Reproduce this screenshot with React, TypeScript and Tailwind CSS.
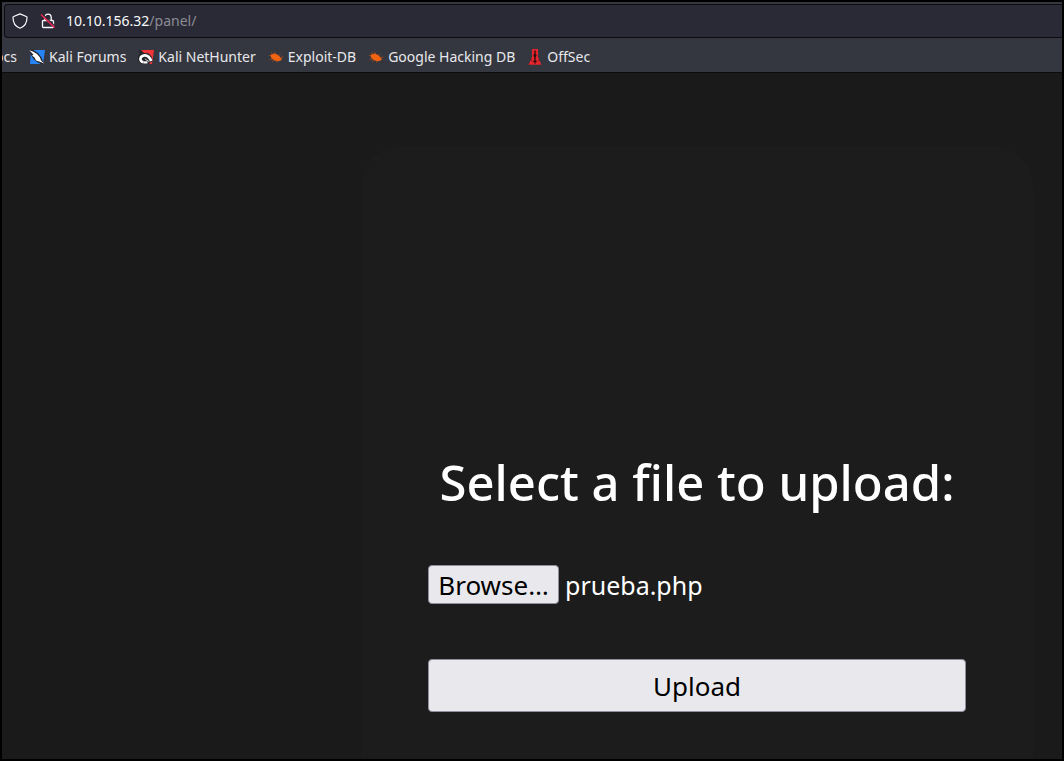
import { useRef, useState } from "react";
import type { ReactNode } from "react";

function ShieldIcon() {
  return (
    <svg viewBox="0 0 16 16" className="size-4 shrink-0" fill="none" stroke="#fbfbfe" strokeWidth="1.2" strokeLinejoin="round" aria-hidden="true">
      <path d="M8 .9 14.3 3.5c.5.2.7.6.7 1C15 9.800 12.200 13.700 8 15.200 3.800 13.700 1 9.800 1 4.500c0-.4.2-.8.7-1Z" />
    </svg>
  );
}

function InsecureIcon() {
  return (
    <svg viewBox="0 0 16 16" className="size-4 shrink-0" fill="none" aria-hidden="true">
      <path d="M4.800 7.500V4.300a3.200 3.200 0 0 1 6.400 0v3.200M3.500 7.500h9c.6 0 1 .4 1 1v5c0 .6-.4 1-1 1h-9c-.6 0-1-.4-1-1v-5c0-.6.4-1 1-1Z" stroke="#fbfbfe" strokeWidth="1.3" />
      <path d="M2.200 .8 15.500 13.700" stroke="#292a36" strokeWidth="1.200" />
      <path d="M1 1.500 14.600 14.700" stroke="#e22850" strokeWidth="1.700" />
    </svg>
  );
}

function ForumsIcon() {
  return (
    <svg viewBox="0 0 16 16" className="size-4 shrink-0" aria-hidden="true">
      <path d="M2 1h14l-2 14H1Z" fill="#2684f5" />
      <path d="M0 .5 4 .8 9 4l3.500 4.500 1 3L16 15l-3.500.3L8 13 4.500 10 2 6Z" fill="#23252b" />
      <path d="M.3 1.200 4 2.500 8 5l3 3.500 1 3 3.500 3.300-4.500-2L7 11.500 5.500 8.500 3 6.500l1.500-.8Z" fill="#fff" />
    </svg>
  );
}

function NetHunterIcon() {
  return (
    <svg viewBox="0 0 16 16" className="size-4 shrink-0" aria-hidden="true">
      <path d="M3 1h13l-2 14H3Z" fill="#f0343a" />
      <path d="M.5 1.500 3 1l3 3 4.500.3L13.500 7.500l1.200 5-2 .5-1.700 2H3L0 12V7l2-2Z" fill="#22242a" />
      <path d="M5.500 13.300C1.500 12.500 1.500 8 5 6.700c4-1.300 6.500 1.300 8.300 5.300" fill="none" stroke="#fff" strokeWidth="2.600" />
      <path d="M5.500 13.400h4" stroke="#fff" strokeWidth="2.200" />
      <path d="m6.800 9.800 4.700 3" stroke="#d5d5d8" strokeWidth="1" />
    </svg>
  );
}

function BugIcon() {
  return (
    <svg viewBox="0 0 16 16" className="size-4 shrink-0" aria-hidden="true">
      <path d="M2.500 6.500C3.500 4.800 6 4.500 8.500 5.200c2.400.8 3.800 2.300 4 3.800l1.700 1-1.700 1.500c-2.300 1.200-5 .8-7-.7C3.700 9.800 2.700 8.500 2.500 6.500Z" fill="#f36412" />
      <path d="M4.500 6 3.500 3.300M8 5.200 6.200 2.800M11 6.500l1.500-1.500M12.500 8.500l2.800-.5M4.500 10l-3 .3M6 11l-1.800 1.800M9 11.500l-.5 2M1 6.500h2" stroke="#b54b17" strokeWidth=".8" fill="none" />
    </svg>
  );
}

function OffSecIcon() {
  return (
    <svg viewBox="0 0 16 16" className="size-4 shrink-0" aria-hidden="true">
      <path d="M5 0h6v8l3.500 7.700h-13L5 8Z" fill="#e5252b" />
      <path d="M7.300 1.500h1.400V5l1 1-1 2.500v3l2 1-2 .5v1.500H7.300V13l-2-.5 2-1v-3L6.300 6l1-1Z" fill="#2b0d10" />
      <path d="M4.500 9.500 3 12.500l2-.7ZM11.500 9.500l1.500 3-2-.7Z" fill="#8e1a1f" />
    </svg>
  );
}

function Bookmark({ icon, children }: { icon: ReactNode; children: ReactNode }) {
  return (
    <a href="#" className="flex items-center gap-1 whitespace-nowrap">
      {icon}
      <span>{children}</span>
    </a>
  );
}

export default function App() {
  const picker = useRef<HTMLInputElement>(null);
  const [fileName, setFileName] = useState("prueba.php");

  return (
    <div className="flex h-screen flex-col overflow-hidden border-2 border-black bg-[#1a1a1a] font-['Noto_Sans',sans-serif]">
      <header className="border-b border-[#0c0c0d] bg-[#34373f] pt-[2px] text-[14px] leading-5 text-[#fbfbfe]">
        <div className="ml-[2px] flex h-[34px] items-center gap-3 rounded-l-[4px] border border-r-0 border-[#0c0d10] bg-[#292a36] pl-[7px]">
          <ShieldIcon />
          <InsecureIcon />
          <div className="relative -ml-[2px] flex-1">
            <input
              type="text"
              aria-label="Address"
              defaultValue="10.10.156.32/panel/"
              className="w-full bg-transparent text-transparent caret-white outline-none"
            />
            <div aria-hidden="true" className="pointer-events-none absolute inset-0">
              10.10.156.32<span className="text-[#8c8c94]">/panel/</span>
            </div>
          </div>
        </div>
        <nav aria-label="Bookmarks" className="flex h-[34px] items-center gap-3 overflow-hidden pt-1 text-[#e8e8ec]">
          <a href="#" className="flex w-[15px] justify-end whitespace-nowrap">ocs</a>
          <Bookmark icon={<ForumsIcon />}>Kali Forums</Bookmark>
          <Bookmark icon={<NetHunterIcon />}>Kali NetHunter</Bookmark>
          <Bookmark icon={<BugIcon />}>Exploit-DB</Bookmark>
          <Bookmark icon={<BugIcon />}>Google Hacking DB</Bookmark>
          <Bookmark icon={<OffSecIcon />}>OffSec</Bookmark>
        </nav>
      </header>

      <main className="flex flex-1 justify-end pt-[73px] pr-[29px]">
        <form
          onSubmit={(e) => e.preventDefault()}
          className="flex w-[672px] flex-col rounded-t-[40px] bg-[#1c1c1c] px-[67px] pt-[300px] text-[26px] leading-9"
        >
          <h1 className="text-center text-[49px] leading-[72px] font-medium whitespace-nowrap text-white">Select a file to upload:</h1>
          <div className="mt-[47px] flex items-center gap-[6px]">
            <input
              ref={picker}
              type="file"
              aria-label="File to upload"
              className="hidden"
              onChange={(e) => setFileName(e.target.files?.[0]?.name ?? "No file selected.")}
            />
            <button
              type="button"
              onClick={() => picker.current?.click()}
              className="h-[39px] min-w-[131px] rounded-[4px] border border-[#8f8f9d] bg-[#e9e9ed] px-[5px] text-black"
            >
              Browse…
            </button>
            <span className="text-[25px] text-white">{fileName}</span>
          </div>
          <button type="submit" className="mt-[55px] h-[53px] rounded-[4px] border border-[#8f8f9d] bg-[#e9e9ed] text-black">
            Upload
          </button>
        </form>
      </main>
    </div>
  );
}
